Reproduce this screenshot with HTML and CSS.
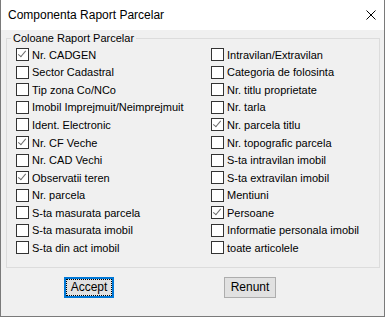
FILE: index.html
```html
<!DOCTYPE html>
<html lang="ro">
<head>
    <meta charset="UTF-8">
    <title>Componenta Raport Parcelar</title>
    <link rel="stylesheet" href="styles.css">
</head>
<body>
    <div class="window">
        <div class="titlebar">
            <span class="title">Componenta Raport Parcelar</span>
            <svg class="close" width="10" height="10" viewBox="0 0 10 10">
                <path d="M0.5 0.5 L9.5 9.5 M9.5 0.5 L0.5 9.5" stroke="#000" stroke-width="1" fill="none"/>
            </svg>
        </div>

        <fieldset class="group">
            <legend>Coloane Raport Parcelar</legend>
            <div class="options">
                <label class="opt checked"><span class="box"></span>Nr. CADGEN</label>
                <label class="opt"><span class="box"></span>Intravilan/Extravilan</label>
                <label class="opt"><span class="box"></span>Sector Cadastral</label>
                <label class="opt"><span class="box"></span>Categoria de folosinta</label>
                <label class="opt"><span class="box"></span>Tip zona Co/NCo</label>
                <label class="opt"><span class="box"></span>Nr. titlu proprietate</label>
                <label class="opt"><span class="box"></span>Imobil Imprejmuit/Neimprejmuit</label>
                <label class="opt"><span class="box"></span>Nr. tarla</label>
                <label class="opt"><span class="box"></span>Ident. Electronic</label>
                <label class="opt checked"><span class="box"></span>Nr. parcela titlu</label>
                <label class="opt checked"><span class="box"></span>Nr. CF Veche</label>
                <label class="opt"><span class="box"></span>Nr. topografic parcela</label>
                <label class="opt"><span class="box"></span>Nr. CAD Vechi</label>
                <label class="opt"><span class="box"></span>S-ta intravilan imobil</label>
                <label class="opt checked"><span class="box"></span>Observatii teren</label>
                <label class="opt"><span class="box"></span>S-ta extravilan imobil</label>
                <label class="opt"><span class="box"></span>Nr. parcela</label>
                <label class="opt"><span class="box"></span>Mentiuni</label>
                <label class="opt"><span class="box"></span>S-ta masurata parcela</label>
                <label class="opt checked"><span class="box"></span>Persoane</label>
                <label class="opt"><span class="box"></span>S-ta masurata imobil</label>
                <label class="opt"><span class="box"></span>Informatie personala imobil</label>
                <label class="opt"><span class="box"></span>S-ta din act imobil</label>
                <label class="opt"><span class="box"></span>toate articolele</label>
            </div>
        </fieldset>

        <div class="buttons">
            <button class="btn default">Accept</button>
            <button class="btn">Renunt</button>
        </div>
    </div>
</body>
</html>
```

FILE: styles.css
```css
body {
    margin: 0;
    font-family: "Liberation Sans", Arial, sans-serif;
    background: #f0f0f0;
}

.window {
    width: 383px;
    height: 316px;
    background: #f0f0f0;
    border: 1px solid #7a7a7a;
    border-top: none;
}

.titlebar {
    height: 30px;
    background: #fff;
    display: flex;
    align-items: center;
    justify-content: space-between;
    padding: 0 8px 0 7px;
}
.title {
    font-size: 12px;
    color: #000;
}
.close {
    display: block;
    margin-top: -1px;
}

.group {
    margin: 1px 4px 0 5px;
    padding: 0 9px 10px 9px;
    border: 1px solid #dcdcdc;
}
.group legend {
    font-size: 11px;
    line-height: 14px;
    padding: 0 2px;
    margin-left: -5px;
    color: #000;
}

.options {
    display: grid;
    grid-template-columns: 195px 1fr;
    grid-auto-rows: 17.55px;
    margin-top: 1px;
}
.opt {
    display: flex;
    align-items: center;
    font-size: 11px;
    color: #000;
    white-space: nowrap;
}
.box {
    width: 11px;
    height: 11px;
    border: 1px solid #333;
    background: #fff;
    margin-right: 3px;
    position: relative;
}
.checked .box::after {
    content: "";
    position: absolute;
    left: 3px;
    top: 0px;
    width: 3px;
    height: 7px;
    border-right: 1px solid #6d6d6d;
    border-bottom: 1px solid #6d6d6d;
    transform: rotate(40deg);
}

.buttons {
    display: flex;
    gap: 110px;
    padding-left: 63px;
    margin-top: 9px;
}
.btn {
    display: block;
    height: 21px;
    font-family: "Liberation Sans", Arial, sans-serif;
    font-size: 12px;
    color: #000;
    background: #e1e1e1;
    border: 1px solid #adadad;
    padding: 0;
    width: 52px;
}
.btn.default {
    width: 50px;
    border: 2px solid #0078d7;
    outline: 1px dotted #000;
    outline-offset: -3px;
}
```
